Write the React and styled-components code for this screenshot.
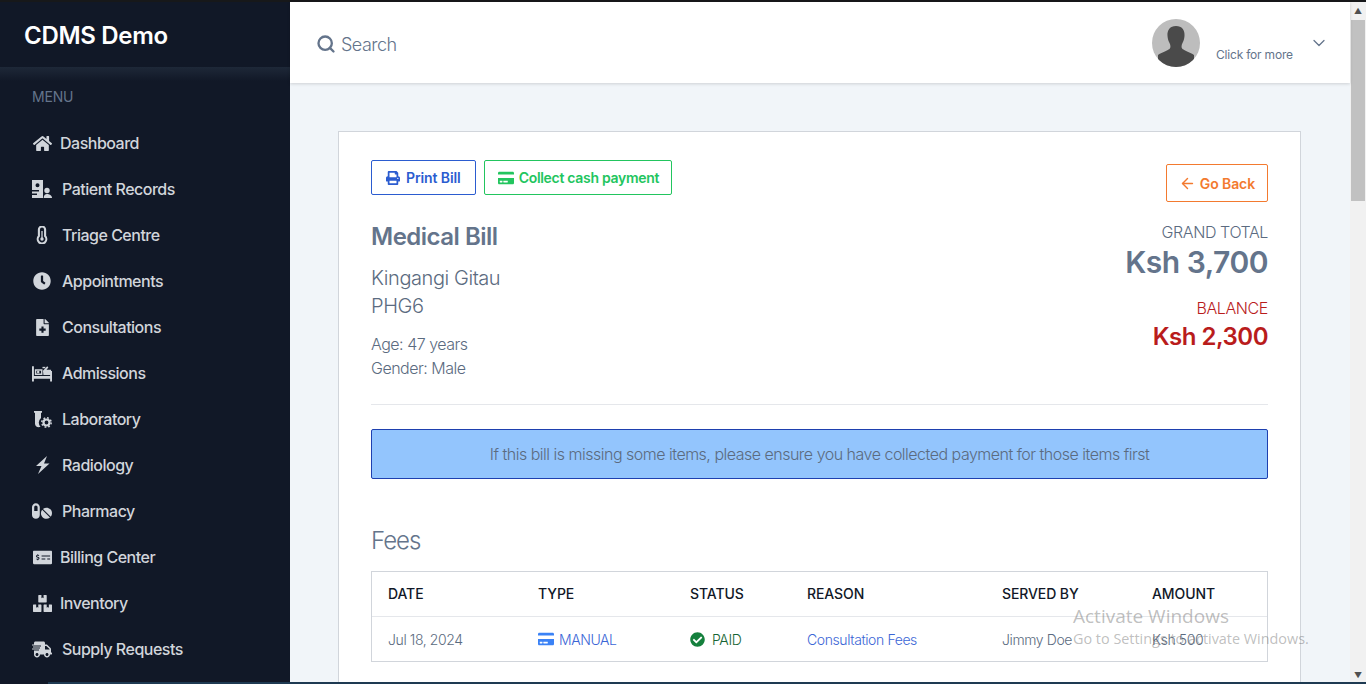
import React from "react";
import styled, { createGlobalStyle } from "styled-components";
import { FaHome, FaClock, FaFileMedical, FaPills, FaMoneyCheckAlt, FaBoxes, FaShippingFast, FaPrint, FaCreditCard, FaCheckCircle } from "react-icons/fa";
import { ArrowLeft, ChevronDown, Search } from "lucide-react";

const Global = createGlobalStyle`
  html, body { margin: 0; padding: 0; height: 100%; overflow: hidden; }
  body { font-family: Inter, "Open Sans", "Liberation Sans", sans-serif; background: #000; }
  * { box-sizing: border-box; }
`;
const Screen = styled.div`position: relative; width: 1366px; height: 684px; overflow: hidden; display: flex; flex-direction: column; background: #f1f5f9;`;
const TopStrip = styled.div`height: 2px; background: #17181a; flex: none;`;
const Body = styled.div`display: flex; flex: 1; min-height: 0;`;
const Sidebar = styled.aside`width: 290px; flex: none; background: #111827; color: #d1d5db; display: flex; flex-direction: column;`;
const Brand = styled.div`height: 65px; padding: 18px 24px 0; font-size: 24px; line-height: 32px; font-weight: 600; color: #fff; letter-spacing: -0.3px; flex: none;`;
const BrandGlow = styled.div`height: 14px; background: linear-gradient(#1e2838, #111827); flex: none;`;
const MenuLabel = styled.div`padding: 6px 32px 0; height: 39px; font-size: 14px; line-height: 20px; color: #64748b; letter-spacing: -0.2px;`;
const Menu = styled.nav`display: flex; flex-direction: column;`;
const Item = styled.a`height: 46px; display: flex; align-items: center; padding-left: 32px; font-size: 16px; font-weight: 500; color: #d1d5db; letter-spacing: -0.5px;`;
const ItemIcon = styled.span`width: 20px; display: flex; justify-content: center; margin-right: ${(p) => p.$gap}px; flex: none; font-size: ${(p) => p.$size}px;`;
const Main = styled.main`flex: 1; min-width: 0; display: flex; flex-direction: column;`;
const TopBar = styled.header`height: 81px; flex: none; background: #fff; display: flex; align-items: center; padding: 0 21px 0 26px; box-shadow: 0 1px 3px rgba(0, 0, 0, 0.15); position: relative;`;
const SearchBox = styled.div`display: flex; align-items: center; gap: 5px; color: #64748b; font-size: 18px; flex: 1; font-weight: 300; padding-top: 3px; letter-spacing: -0.5px;`;
const Account = styled.div`display: flex; align-items: flex-start; color: #64748b;`;
const Avatar = styled.svg`width: 48px; height: 48px; border-radius: 50%; flex: none; margin-top: 1px;`;
const More = styled.span`font-size: 12px; line-height: 16px; margin: 29px 0 0 16px; width: 93px; letter-spacing: -0.2px;`;
const Chevron = styled.span`display: block; margin: 15px 0 0 0;`;
const Content = styled.div`flex: 1; padding: 48px 49px 0 48px; overflow: hidden;`;
const Card = styled.section`background: #fff; border: 1px solid #d1d5db; padding: 28px 32px 0; height: 700px;`;
const HeadRow = styled.div`display: flex; justify-content: space-between; border-bottom: 1px solid #e5e7eb; padding-bottom: 24px; height: 245px;`;
const LeftCol = styled.div`display: flex; flex-direction: column; align-items: flex-start;`;
const Buttons = styled.div`display: flex; gap: 8px;`;
const Btn = styled.button`height: ${(p) => p.$h || 35}px; padding: 0 ${(p) => p.$pr || p.$px}px 0 ${(p) => p.$px}px; background: #fff; border: 1px solid ${(p) => p.$c}; color: ${(p) => p.$c}; border-radius: 2px; font: 600 14px Inter, sans-serif; letter-spacing: ${(p) => p.$ls || -0.1}px; display: flex; align-items: center; gap: ${(p) => p.$gap || 6}px;`;
const Title = styled.h1`margin: 26px 0 0; font-size: 24px; line-height: 32px; font-weight: 600; color: #64748b; letter-spacing: -0.5px;`;
const Name = styled.div`margin-top: 11px; font-size: 20px; line-height: 28px; font-weight: 300; color: #5b6b80; letter-spacing: -0.43px;`;
const Meta = styled.div`margin-top: 12px; font-size: 16px; line-height: 24px; font-weight: 300; color: #5b6b80; letter-spacing: -0.5px;`;
const RightCol = styled.div`display: flex; flex-direction: column; align-items: flex-end; padding-top: 4px;`;
const Label = styled.div`margin-top: ${(p) => p.$mt}px; font-size: 16px; line-height: 24px; font-weight: 300; color: ${(p) => p.$c}; letter-spacing: -0.4px;`;
const Big = styled.div`font-size: ${(p) => p.$s}px; line-height: ${(p) => p.$l}px; font-weight: 600; color: ${(p) => p.$c}; letter-spacing: -0.5px;`;
const Alert = styled.div`margin-top: 24px; height: 50px; background: #93c5fd; border: 1px solid #1e40af; border-radius: 2px; display: flex; align-items: center; justify-content: center; font-size: 16px; font-weight: 300; color: #5b6b80; letter-spacing: -0.5px;`;
const Section = styled.h2`margin: 46px 0 14px; font-size: 24px; line-height: 32px; font-weight: 300; color: #64748b; letter-spacing: -1px;`;
const Table = styled.div`border: 1px solid #d1d5db;`;
const Row = styled.div`display: grid; grid-template-columns: 150px 152px 117px 195px 150px 1fr; height: ${(p) => p.$h}px; align-items: center; padding-left: 16px; padding-bottom: ${(p) => (p.$head ? 1 : 0)}px; border-bottom: ${(p) => (p.$head ? "1px solid #e5e7eb" : "none")};`;
const Th = styled.div`font-size: 14px; font-weight: 500; color: #111827; letter-spacing: -0.1px;`;
const Td = styled.div`font-size: 14px; font-weight: 300; color: ${(p) => p.$c || "#5b6b80"}; display: flex; align-items: center; gap: ${(p) => p.$gap || 0}px; letter-spacing: -0.4px;`;
const Rail = styled.div`width: 16px; flex: none; background: #f1f1f1; display: flex; flex-direction: column; align-items: center;`;
const Arrow = styled.div`height: 18px; flex: none; display: flex; align-items: center; justify-content: center; color: #505050; font-size: 8px;`;
const Thumb = styled.div`width: 14px; height: 181px; background: #c1c1c1; flex: none;`;
const RailGap = styled.div`flex: 1;`;
const BottomStrip = styled.div`position: absolute; left: 48px; right: 0; bottom: 0; height: 2px; background: #1e3a52;`;
const Watermark = styled.div`position: absolute; left: 1073px; top: 604px; color: rgba(90, 90, 90, 0.4); font-family: "Open Sans", sans-serif; pointer-events: none;`;
const WmTitle = styled.div`font-size: 19px; line-height: 24px;`;
const WmSub = styled.div`font-size: 14.4px; line-height: 22px;`;

function PatientIcon() {
  return (
    <svg width="20" height="18" viewBox="0 0 20 18" fill="currentColor">
      <path fillRule="evenodd" d="M0 0h11v18H0v-3h5v-1.500H0v-2h7V10H0zm5.500 3.200a2 2 0 1 0 0 4 2 2 0 0 0 0-4z" />
      <circle cx="15" cy="10.500" r="2.700" />
      <path d="M11.700 18c0-2.600 1.300-4 3.300-4s5 1.400 5 4z" />
    </svg>
  );
}
function ThermoIcon() {
  return (
    <svg width="12" height="18" viewBox="0 0 12 18" fill="none" stroke="currentColor" strokeWidth="2.100">
      <path d="M2.900 3.600a3.100 3.100 0 0 1 6.200 0v6.500a4.300 4.300 0 1 1-6.200 0z" />
      <circle cx="6" cy="13" r="1.700" fill="currentColor" stroke="none" />
      <path d="M6 5v8" strokeWidth="1.300" />
    </svg>
  );
}
function BedIcon() {
  return (
    <svg width="21" height="17" viewBox="0 0 21 17" fill="currentColor">
      <path d="M0 1h2v10h17V6h2v11h-2v-3H2v3H0z" />
      <path fillRule="evenodd" d="M3 4h8v6H3zm1.500 1.500v3h5v-3z" />
      <circle cx="6.500" cy="7" r="1.300" />
      <path d="M11.500 5.500 16 1l1.200 1.200-2 2.300H20V10h-8z" />
      <path d="M11 1.500h3V3h-3z" />
    </svg>
  );
}
function LabIcon() {
  return (
    <svg width="19" height="17" viewBox="0 0 19 17" fill="currentColor">
      <path d="M1 0h8v1.800H8V7a6 6 0 0 0-.5 8.800 3 3 0 0 1-1 .2A3.500 3.500 0 0 1 2 12.500V1.800H1z" />
      <circle cx="13.500" cy="11.500" r="3" fill="none" stroke="currentColor" strokeWidth="2.200" />
      <circle cx="13.500" cy="11.500" r="4.700" fill="none" stroke="currentColor" strokeWidth="1.500" strokeDasharray="1.800 1.890" />
    </svg>
  );
}
function BoltIcon() {
  return (
    <svg width="15" height="18" viewBox="0 0 15 18" fill="currentColor">
      <path d="M12 0 1 10h5.500L3 18 14.500 7.500H9z" />
    </svg>
  );
}

const nav = [
  ["Dashboard", FaHome, 8, 19],
  ["Patient Records", PatientIcon, 10, 18],
  ["Triage Centre", ThermoIcon, 10, 18],
  ["Appointments", FaClock, 10, 18],
  ["Consultations", FaFileMedical, 10, 17],
  ["Admissions", BedIcon, 10, 18],
  ["Laboratory", LabIcon, 10, 18],
  ["Radiology", BoltIcon, 10, 18],
  ["Pharmacy", FaPills, 10, 20],
  ["Billing Center", FaMoneyCheckAlt, 8, 19],
  ["Inventory", FaBoxes, 8, 19],
  ["Supply Requests", FaShippingFast, 10, 21],
];

export default function App() {
  return (
    <Screen>
      <Global />
      <TopStrip />
      <Body>
        <Sidebar>
          <Brand>CDMS Demo</Brand>
          <BrandGlow />
          <MenuLabel>MENU</MenuLabel>
          <Menu>
            {nav.map(([label, Icon, gap, size]) => (
              <Item key={label}>
                <ItemIcon $gap={gap} $size={size}><Icon /></ItemIcon>
                {label}
              </Item>
            ))}
          </Menu>
        </Sidebar>
        <Main>
          <TopBar>
            <SearchBox><Search size={20} strokeWidth={2.8} />Search</SearchBox>
            <Account>
              <Avatar viewBox="0 0 48 48">
                <rect width="48" height="48" fill="#bdbdbd" />
                <path fill="#4a4a4a" d="M24 7c6 0 9 4 8.500 10-.2 3-1 5-2 7-1 2-1.500 4.500 0 6 2 1.500 8 3.500 11.500 6v12H6V36c3.500-2.500 9.500-4.500 11.500-6 1.500-1.500 1-4 0-6-1-2-1.800-4-2-7C15 11 18 7 24 7z" />
              </Avatar>
              <More>Click for more</More>
              <Chevron><ChevronDown size={20} strokeWidth={1.5} /></Chevron>
            </Account>
          </TopBar>
          <Content>
            <Card>
              <HeadRow>
                <LeftCol>
                  <Buttons>
                    <Btn $c="#2b5cd0" $px={14}><FaPrint size={14} />Print Bill</Btn>
                    <Btn $c="#22c55e" $px={13} $pr={12} $gap={5} $ls={-0.3}><FaCreditCard size={16} />Collect cash payment</Btn>
                  </Buttons>
                  <Title>Medical Bill</Title>
                  <Name>Kingangi Gitau<br />PHG6</Name>
                  <Meta>Age: 47 years<br />Gender: Male</Meta>
                </LeftCol>
                <RightCol>
                  <Btn $c="#f37a2f" $px={12} $gap={4} $h={38}><ArrowLeft size={17} strokeWidth={2} />Go Back</Btn>
                  <Label $mt={18} $c="#5b6b80">GRAND TOTAL</Label>
                  <Big $s={30} $l={36} $c="#64748b">Ksh 3,700</Big>
                  <Label $mt={16} $c="#b91c1c">BALANCE</Label>
                  <Big $s={24} $l={34} $c="#b91c1c">Ksh 2,300</Big>
                </RightCol>
              </HeadRow>
              <Alert>If this bill is missing some items, please ensure you have collected payment for those items first</Alert>
              <Section>Fees</Section>
              <Table>
                <Row $h={45} $head>
                  <Th>DATE</Th><Th>TYPE</Th><Th>STATUS</Th><Th>REASON</Th><Th>SERVED BY</Th><Th>AMOUNT</Th>
                </Row>
                <Row $h={44}>
                  <Td>Jul 18, 2024</Td>
                  <Td $c="#3b66d6" $gap={5}><FaCreditCard size={16} color="#3b82f6" />MANUAL</Td>
                  <Td $c="#166534" $gap={7}><FaCheckCircle size={15} color="#15803d" />PAID</Td>
                  <Td $c="#3b66d6">Consultation Fees</Td>
                  <Td>Jimmy Doe</Td>
                  <Td>Ksh 500</Td>
                </Row>
              </Table>
            </Card>
          </Content>
        </Main>
        <Rail>
          <Arrow>▲</Arrow>
          <Thumb />
          <RailGap />
          <Arrow>▼</Arrow>
        </Rail>
      </Body>
      <BottomStrip />
      <Watermark>
        <WmTitle>Activate Windows</WmTitle>
        <WmSub>Go to Settings to activate Windows.</WmSub>
      </Watermark>
    </Screen>
  );
}
